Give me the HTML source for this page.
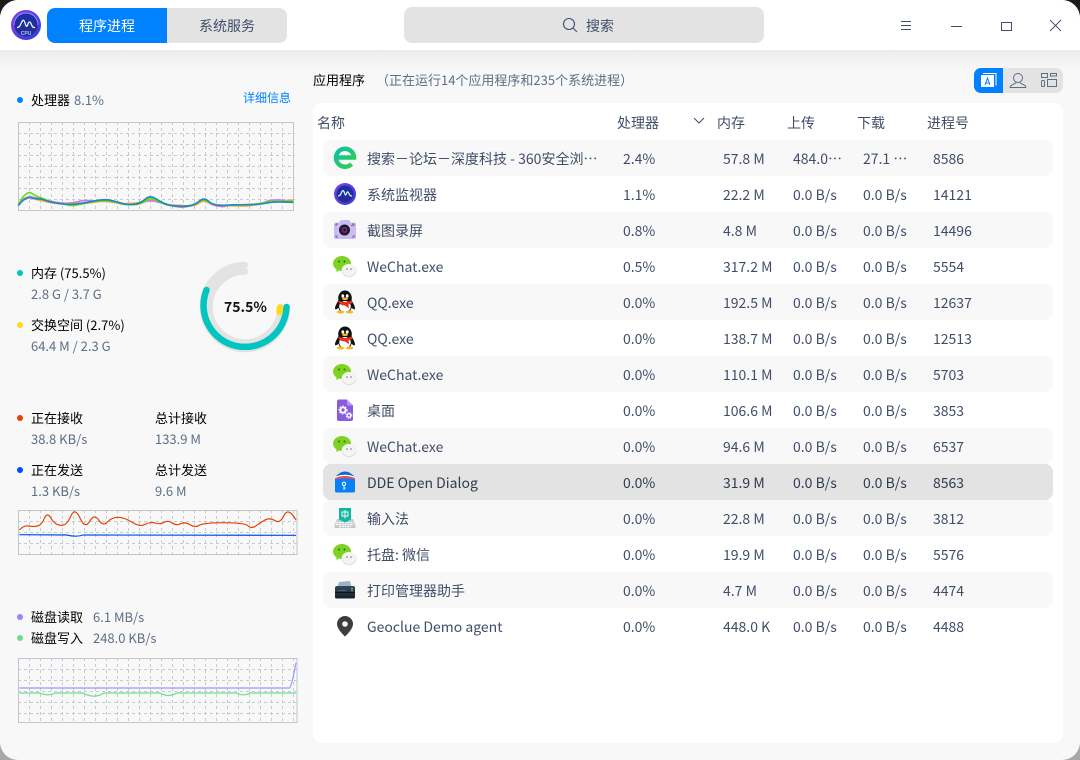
<!DOCTYPE html>
<html><head><meta charset="utf-8">
<style>
*{box-sizing:border-box}
html,body{margin:0;padding:0;width:1080px;height:760px;overflow:hidden}
body{background:linear-gradient(#1c1c1c 0,#2a2a2a 40px,#9a9a9a 400px,#a8a8a8 100%);font-family:"Noto Sans CJK SC","Liberation Sans",sans-serif;font-size:14px;position:relative}
#win{position:absolute;left:0;top:0;width:1080px;height:760px;border-radius:18px;background:#f8f8f8;overflow:hidden}
#tb{position:absolute;left:0;top:0;width:1080px;height:50px;background:#fff}
#sh{position:absolute;left:0;top:50px;width:1080px;height:20px;background:linear-gradient(#ebebeb,#f8f8f8)}
.t{position:absolute;white-space:nowrap;line-height:20px}
.k{color:#000;font-size:13px}
.g{color:#5c6f84;font-size:13px}
.c{color:#414d68}
.d{position:absolute;width:6px;height:6px;border-radius:50%}
#main{position:absolute;left:313px;top:103px;width:750px;height:640px;background:#fff;border-radius:8px}
.r{position:absolute;left:323px;width:730px;height:36px;border-radius:8px;color:#414d68}
.r.o{background:#f8f8f8}
.r.s{background:#e3e3e3;color:#303a4f}
.r span{position:absolute;top:8.500px;line-height:20px;white-space:nowrap}
.r svg{position:absolute;left:10px;top:6px;width:24px;height:24px}
.a{left:44px}.b{left:300px}.e{left:400px}.f{left:470px}.h{left:540px}.i{left:610px}
svg.abs{position:absolute;left:0;top:0}
</style></head><body>
<svg width="0" height="0" style="position:absolute">
<defs>
<linearGradient id="lg1" x1="0" y1="0" x2="1" y2="1"><stop offset="0" stop-color="#8a3df0"/><stop offset="1" stop-color="#2a3fd8"/></linearGradient>
<linearGradient id="lg2" x1="0" y1="0" x2="0" y2="1"><stop offset="0" stop-color="#1a2fa8"/><stop offset="1" stop-color="#2c2a90"/></linearGradient>
<linearGradient id="eg" x1="0" y1="0" x2="1" y2="1"><stop offset="0" stop-color="#0fc0a8"/><stop offset="1" stop-color="#2fd04a"/></linearGradient>
<linearGradient id="prb" x1="0" y1="0" x2="0" y2="1"><stop offset="0" stop-color="#33475a"/><stop offset="1" stop-color="#16222e"/></linearGradient>
<symbol id="mon" viewBox="0 0 24 24"><circle cx="12" cy="12" r="11" fill="url(#lg1)"/><circle cx="12" cy="12" r="8.500" fill="url(#lg2)"/><path d="M5 14c2 0 2.500-1 3.500-3.500C9.500 8 10.500 8 11.300 10.500S12.500 14 13.500 11.500 15 9.500 16 11.500 17 14 19 14" fill="none" stroke="#dff" stroke-width="1.200"/></symbol>
<symbol id="e360" viewBox="0 0 24 24"><path d="M4 11.500H21A9 9 0 1 0 18.500 18" fill="none" stroke="url(#eg)" stroke-width="4.500"/></symbol>
<symbol id="cam" viewBox="0 0 24 24"><path d="M3 4.500h3.500l1-2.500h9l1 2.500H21a2 2 0 0 1 2 2V19a2 2 0 0 1-2 2H3a2 2 0 0 1-2-2V6.500a2 2 0 0 1 2-2z" fill="#cbbcf4"/><path d="M3 8V6h2M21 8V6h-2M3 17v2h2M21 17v2h-2" stroke="#5a4a90" fill="none" stroke-width=".8"/><circle cx="11.500" cy="12" r="5.500" fill="#1f1a26"/><circle cx="11.500" cy="12" r="3" fill="#7a2a78"/><circle cx="11.500" cy="12" r="1.300" fill="#15101a"/><circle cx="19" cy="7.500" r=".9" fill="#e04040"/></symbol>
<symbol id="wx" viewBox="0 0 24 24"><ellipse cx="9" cy="9.500" rx="9" ry="7.500" fill="#7ed321"/><path d="M4 14l-1 4 4-2z" fill="#7ed321"/><circle cx="6" cy="7.500" r="1" fill="#2f6b10"/><circle cx="11.500" cy="7.500" r="1" fill="#2f6b10"/><ellipse cx="16" cy="16.500" rx="7.500" ry="6.500" fill="#dcdcdc"/><ellipse cx="16" cy="16" rx="7" ry="6" fill="#f4f4f4"/><circle cx="14" cy="15" r=".8" fill="#777"/><circle cx="18" cy="15" r=".8" fill="#777"/></symbol>
<symbol id="qq" viewBox="0 0 24 24"><ellipse cx="12" cy="8" rx="6.800" ry="7.500" fill="#111"/><path d="M5.500 10C4 13 2 16 2 18.500c0 1.500 1.800 .7 3.500-.8C6 20.500 8 22 12 22s6-1.500 6.500-4.300c1.700 1.500 3.500 2.300 3.500.8C22 16 20 13 18.500 10z" fill="#111"/><ellipse cx="12" cy="16.500" rx="5.800" ry="5.500" fill="#fff"/><path d="M5 10.500c4.500 2 9.500 2 14 0l.5 2.500-4 1.500.5 3.800-4-2.800C9 15.500 5.500 14 5 10.500z" fill="#e8311f"/><ellipse cx="9.800" cy="6" rx="1.400" ry="1.800" fill="#fff"/><ellipse cx="14.200" cy="6" rx="1.400" ry="1.800" fill="#fff"/><ellipse cx="12" cy="8.800" rx="3" ry="1.300" fill="#f8b81c"/><ellipse cx="7.500" cy="22" rx="3.800" ry="1.500" fill="#f8b81c"/><ellipse cx="16.500" cy="22" rx="3.800" ry="1.500" fill="#f8b81c"/></symbol>
<symbol id="desk" viewBox="0 0 24 24"><path d="M4 3.500A2 2 0 0 1 6 1.500h8l6 6V21a2 2 0 0 1-2 2H6a2 2 0 0 1-2-2z" fill="#8a5be0"/><path d="M14 1.500l6 6h-4a2 2 0 0 1-2-2z" fill="#b99af0"/><circle cx="10" cy="12" r="2.600" fill="none" stroke="#fff" stroke-width="1.800"/><circle cx="10" cy="12" r="4" fill="none" stroke="#fff" stroke-width="1" stroke-dasharray="1.500 1.500"/><circle cx="16" cy="17.500" r="1.800" fill="none" stroke="#fff" stroke-width="1.400"/><circle cx="16" cy="17.500" r="3" fill="none" stroke="#fff" stroke-width=".8" stroke-dasharray="1.200 1.200"/></symbol>
<symbol id="dde" viewBox="0 0 24 24"><path d="M2 7C6 3 9 1.500 12 1.500S18 3 22 7v4H2z" fill="#0a6cd0"/><path d="M2 8c6-3 14-3 20 0v2H2z" fill="#f04a58"/><path d="M2 7.500c6-2.800 14-2.800 20 0" stroke="#fff" stroke-width="1.300" fill="none"/><path d="M2 9.500c6-1.500 14-1.500 20 0V21a1.500 1.500 0 0 1-1.500 1.500h-17A1.500 1.500 0 0 1 2 21z" fill="#0a80f5"/><circle cx="11" cy="13.800" r="1.700" fill="none" stroke="#fff"/><path d="M11 15.500v4.500M11 18h1.500" stroke="#fff"/></symbol>
<symbol id="ime" viewBox="0 0 24 24"><path d="M4 13h16l2.500 6.500v2a1 1 0 0 1-1 .5H2.500a1 1 0 0 1-1-.5v-2z" fill="#c4c9cb"/><path d="M3.500 16.500h17M3 18.500h18M6 20.500h12" stroke="#fff" stroke-width="1.200" stroke-dasharray="2 .8"/><path d="M6 2h12v11.500l-6 3-6-3z" fill="#0fb8a2"/><path d="M9 6h6v4H9zM12 4v8.500" fill="none" stroke="#fff" stroke-width=".9"/></symbol>
<symbol id="prn" viewBox="0 0 24 24"><path d="M6 4l11-1 1.500 5.500h-14z" fill="#9db4c4"/><path d="M4 8h16a2 2 0 0 1 2 2v9a1.500 1.500 0 0 1-1.500 1.500h-17A1.500 1.500 0 0 1 2 19v-9a2 2 0 0 1 2-2z" fill="url(#prb)"/><rect x="2" y="14" width="20" height="1" fill="#0c151d"/><rect x="18" y="10" width="2" height="1.200" fill="#e8a030"/><rect x="18" y="12" width="2" height="1.200" fill="#3aa0e0"/><rect x="5" y="12" width="8" height=".8" fill="#5a6f7f"/></symbol>
<symbol id="pin" viewBox="0 0 24 24"><path d="M12 2a8 8 0 0 0-8 8c0 5.500 8 12.500 8 12.500s8-7 8-12.500a8 8 0 0 0-8-8z" fill="#3d3d3d"/><circle cx="12" cy="10" r="2.800" fill="#f4f4f4"/></symbol>
</defs></svg>

<div id="win">
<div id="tb"></div><div id="sh"></div>

<svg class="abs" style="left:11px;top:10px" width="30" height="30" viewBox="0 0 30 30"><circle cx="15" cy="15" r="15" fill="url(#lg1)"/><path d="M3 15A12 12 0 0 1 27 15" fill="none" stroke="#a8b4ff" stroke-width="1" opacity=".7"/><circle cx="15" cy="15" r="11.500" fill="url(#lg2)"/><path d="M6 17.500c2.500 0 3-1.500 4.500-5 1.300-3 2.500-3 3.500 .5s1.800 4.500 2.800 1.500 2.200-3.500 3.400-.5 1.500 3.500 3.800 3.500" fill="none" stroke="#e6fbff" stroke-width="1.300"/><text x="15" y="25" text-anchor="middle" font-size="5" font-weight="700" fill="#8fd0ff" font-family="Liberation Sans,sans-serif">CPU</text></svg>
<div style="position:absolute;left:47px;top:8px;width:120px;height:35px;background:#0081ff;border-radius:8px 0 0 8px"></div>
<div style="position:absolute;left:167px;top:8px;width:120px;height:35px;background:#e3e3e3;border-radius:0 8px 8px 0"></div>
<div class="t" style="left:79px;top:16px;color:#fff;font-size:14px">程序进程</div>
<div class="t" style="left:199px;top:16px;color:#414d68">系统服务</div>
<div style="position:absolute;left:404px;top:7px;width:360px;height:36px;background:#e3e3e3;border-radius:8px"></div>
<svg class="abs" style="left:562px;top:17px" width="16" height="16" viewBox="0 0 16 16"><circle cx="7" cy="7" r="5.500" fill="none" stroke="#414d68" stroke-width="1.100"/><path d="M11 11l4 4" stroke="#414d68" stroke-width="1.100"/></svg>
<div class="t" style="left:586px;top:16px;color:#414d68">搜索</div>

<svg class="abs" width="1080" height="130" style="pointer-events:none">
<path d="M901 21.500h10M901 25.500h10M901 29.500h10" stroke="#414d68" fill="none"/>
<path d="M951 26.500h11" stroke="#414d68" fill="none"/>
<rect x="1001.500" y="22.500" width="10" height="8" fill="none" stroke="#414d68"/>
<path d="M1050 20l11 11M1061 20l-11 11" stroke="#414d68" fill="none" stroke-width=".9"/>
<path d="M974 75a7 7 0 0 1 7-7h75a7 7 0 0 1 7 7v11a7 7 0 0 1-7 7h-75a7 7 0 0 1-7-7z" fill="#e3e3e3"/>
<path d="M1003 68h-22a7 7 0 0 0-7 7v11a7 7 0 0 0 7 7h22z" fill="#0081ff"/>
<rect x="981" y="75" width="13" height="12" fill="#fff"/>
<path d="M983 73.500h13v12" fill="none" stroke="#fff"/>
<path d="M985 85l2.500-7 2.500 7M986 83h3" stroke="#0081ff" fill="none" stroke-width="1"/>
<circle cx="1018" cy="78" r="4.500" fill="none" stroke="#5c6f84"/>
<path d="M1010 87.500c0-3 5-3 6-5M1026 87.500c0-3-5-3-6-5M1010 87.500h16" fill="none" stroke="#5c6f84"/>
<rect x="1041.500" y="73.500" width="6" height="4" fill="none" stroke="#5c6f84"/>
<rect x="1050.500" y="73.500" width="6" height="2.500" fill="none" stroke="#5c6f84"/>
<rect x="1041.500" y="80.500" width="3" height="6" rx="1" fill="none" stroke="#5c6f84"/>
<rect x="1047.500" y="79.500" width="9" height="7" fill="none" stroke="#5c6f84"/>
</svg>

<!-- left cpu -->
<div class="d" style="left:17px;top:97px;background:#0081ff"></div>
<div class="t k" style="left:31px;top:90px">处理器</div>
<div class="t g" style="left:74px;top:90px">8.1%</div>
<div class="t" style="left:243px;top:88px;color:#0081ff;font-size:12px">详细信息</div>
<svg class="abs" style="left:18px;top:122px" width="277" height="89" viewBox="0 0 277 89">
<g stroke="#c5cbd3" stroke-dasharray="3 3" stroke-width="1" fill="none">
<path d="M11.500 0v89M22.500 0v89M33.500 0v89M44.500 0v89M55.500 0v89M66.500 0v89M77.500 0v89M88.500 0v89M99.500 0v89M110.500 0v89M121.500 0v89M132.500 0v89M143.500 0v89M154.500 0v89M165.500 0v89M176.500 0v89M187.500 0v89M198.500 0v89M209.500 0v89M220.500 0v89M231.500 0v89M242.500 0v89M253.500 0v89M264.500 0v89"/>
<path d="M0 11.500h277M0 22.500h277M0 33.500h277M0 44.500h277M0 55.500h277M0 66.500h277M0 77.500h277"/>
</g>
<rect x=".5" y=".5" width="275" height="88" fill="none" stroke="#c0c6d0"/>
</svg>
<svg class="abs" width="300" height="220" viewBox="0 0 900 660" fill="none" stroke-width="5">
<path stroke="#cc77ee" d="M55 612Q75 590 92 590Q110 595 130 598Q155 606 182 609Q210 612 235 605Q250 598 287 604Q315 604 332 604Q350 605 365 610Q380 613 400 612Q420 612 435 605Q450 600 465 604Q480 608 495 612Q510 618 545 622Q580 618 596 608Q612 598 626 608Q640 618 670 620Q700 612 740 616Q780 614 800 604Q820 598 850 601L880 603"/>
<path stroke="#ffa726" d="M55 610Q75 595 92 592Q110 600 120 600Q130 602 142 606Q155 608 182 611Q210 612 235 610Q260 610 287 606Q315 602 332 606Q350 608 365 611Q380 611 400 610Q420 610 435 600Q450 594 465 600Q480 606 495 612Q510 616 545 616Q580 622 596 610Q612 598 626 608Q640 614 670 616Q700 618 740 618Q780 614 800 606Q820 603 850 604L880 600"/>
<path stroke="#66dd11" d="M55 615Q75 575 92 578Q110 590 125 594Q140 600 150 606Q170 610 190 612Q215 620 235 614Q260 610 287 604Q315 600 332 604Q350 606 365 612Q380 614 400 614Q420 614 435 604Q450 590 465 600Q480 606 495 613Q510 618 545 619Q580 618 596 606Q612 594 626 606Q640 616 670 616Q700 616 740 614Q780 612 800 606Q820 604 850 604L880 604"/>
<path stroke="#1e88c8" d="M55 617Q75 590 92 593Q110 597 120 597Q130 598 142 603Q155 608 182 611Q210 615 235 611Q260 608 287 602Q315 597 332 601Q350 605 365 610Q380 615 400 613Q420 612 435 598Q450 585 465 595Q480 605 495 611Q510 618 545 619Q580 620 596 605Q612 590 626 604Q640 618 670 616Q700 614 740 614Q780 614 800 609Q820 605 850 606L880 607"/>
</svg>

<!-- memory -->
<div class="d" style="left:17px;top:270px;background:#00c5c0"></div>
<div class="t k" style="left:31px;top:263px">内存 (75.5%)</div>
<div class="t g" style="left:31px;top:284px">2.8 G / 3.7 G</div>
<div class="d" style="left:17px;top:322px;background:#ffd91a"></div>
<div class="t k" style="left:31px;top:315px">交换空间 (2.7%)</div>
<div class="t g" style="left:31px;top:336px">64.4 M / 2.3 G</div>
<svg class="abs" style="left:190px;top:252px" width="110" height="110" viewBox="190 252 110 110" fill="none" stroke-linecap="round">
<path d="M287 307A42 42 0 1 1 245 265" stroke="#e3e3e3" stroke-width="6.500"/>
<path d="M280.500 307A35.500 35.500 0 1 1 245 271.500" stroke="#e3e3e3" stroke-width="6.500"/>
<path d="M286.500 307A41.500 41.500 0 1 1 206.500 290" stroke="#00c5c0" stroke-width="6.500"/>
<path d="M280 307.500A35 35 0 0 1 279.500 312" stroke="#ffd91a" stroke-width="6.500"/>
</svg>
<div class="t" style="left:224px;top:297px;font-weight:700;font-size:14px;color:#111">75.5%</div>

<!-- network -->
<div class="d" style="left:17px;top:415px;background:#e14300"></div>
<div class="t k" style="left:31px;top:408px">正在接收</div>
<div class="t g" style="left:31px;top:429px">38.8 KB/s</div>
<div class="t k" style="left:155px;top:408px">总计接收</div>
<div class="t g" style="left:155px;top:429px">133.9 M</div>
<div class="d" style="left:17px;top:467px;background:#004cff"></div>
<div class="t k" style="left:31px;top:460px">正在发送</div>
<div class="t g" style="left:31px;top:481px">1.3 KB/s</div>
<div class="t k" style="left:155px;top:460px">总计发送</div>
<div class="t g" style="left:155px;top:481px">9.6 M</div>
<svg class="abs" style="left:18px;top:510px" width="280" height="45" viewBox="0 0 280 45">
<g stroke="#c5cbd3" stroke-dasharray="3 3" fill="none">
<path d="M11.500 0v45M22.500 0v45M33.500 0v45M44.500 0v45M55.500 0v45M66.500 0v45M77.500 0v45M88.500 0v45M99.500 0v45M110.500 0v45M121.500 0v45M132.500 0v45M143.500 0v45M154.500 0v45M165.500 0v45M176.500 0v45M187.500 0v45M198.500 0v45M209.500 0v45M220.500 0v45M231.500 0v45M242.500 0v45M253.500 0v45M264.500 0v45M275.500 0v45"/>
<path d="M0 11.500h280M0 22.500h280M0 33.500h280"/>
</g>
<rect x=".5" y=".5" width="278.500" height="44" fill="none" stroke="#c0c6d0"/>
</svg>
<svg class="abs" style="left:0;top:250px" width="300" height="310" viewBox="0 0 900 930" fill="none" stroke-width="3.500">
<path stroke="#e14300" d="M58 840Q72 825 86 828Q100 831 112 828Q125 826 133 805Q142 785 153 805Q165 825 182 826Q200 828 212 799Q225 770 240 804Q255 838 269 814Q283 790 296 810Q310 830 322 816Q335 803 352 802Q370 801 395 816Q420 832 435 823Q450 815 465 819Q480 824 492 817Q505 810 517 819Q530 828 542 821Q555 815 570 824Q585 834 597 826Q610 818 672 818Q735 818 745 828Q755 838 770 826Q785 815 797 809Q810 803 825 812Q840 822 852 796Q865 770 888 810"/>
<path stroke="#004cff" d="M58 854L200 855Q228 862 250 855L888 856"/>
</svg>

<!-- disk -->
<div class="d" style="left:17px;top:614px;background:#8f88ff"></div>
<div class="t k" style="left:31px;top:607px">磁盘读取</div>
<div class="t g" style="left:93px;top:607px">6.1 MB/s</div>
<div class="d" style="left:17px;top:635px;background:#6fdc8c"></div>
<div class="t k" style="left:31px;top:628px">磁盘写入</div>
<div class="t g" style="left:93px;top:628px">248.0 KB/s</div>
<svg class="abs" style="left:18px;top:658px" width="280" height="65" viewBox="0 0 280 65">
<g stroke="#c5cbd3" stroke-dasharray="3 3" fill="none">
<path d="M11.500 0v65M22.500 0v65M33.500 0v65M44.500 0v65M55.500 0v65M66.500 0v65M77.500 0v65M88.500 0v65M99.500 0v65M110.500 0v65M121.500 0v65M132.500 0v65M143.500 0v65M154.500 0v65M165.500 0v65M176.500 0v65M187.500 0v65M198.500 0v65M209.500 0v65M220.500 0v65M231.500 0v65M242.500 0v65M253.500 0v65M264.500 0v65M275.500 0v65"/>
<path d="M0 11.500h280M0 22.500h280M0 33.500h280M0 44.500h280M0 55.500h280"/>
</g>
<rect x=".5" y=".5" width="278.500" height="64" fill="none" stroke="#c0c6d0"/>
</svg>
<svg class="abs" style="left:0;top:600px" width="310" height="160" viewBox="0 0 930 480" fill="none">
<path stroke="#9a94ff" stroke-width="3.500" d="M58 264L868 264Q875 260 888 188"/>
<path stroke="#6fdc8c" stroke-width="3.500" d="M58 279H120Q145 290 165 279H250Q282 298 312 279H480Q505 294 530 279H710Q730 290 750 279H888"/>
</svg>

<!-- right -->
<div class="t k" style="left:313px;top:70px">应用程序</div>
<div class="t g" style="left:376px;top:70px">（正在运行14个应用程序和235个系统进程）</div>
<div id="main"></div>
<div class="t c" style="left:317px;top:113px">名称</div>
<div class="t c" style="left:617px;top:113px">处理器</div>
<svg class="abs" style="left:693px;top:117px" width="12" height="8"><path d="M1 1l5 5 5-5" fill="none" stroke="#414d68"/></svg>
<div class="t c" style="left:717px;top:113px">内存</div>
<div class="t c" style="left:787px;top:113px">上传</div>
<div class="t c" style="left:857px;top:113px">下载</div>
<div class="t c" style="left:927px;top:113px">进程号</div>

<div class="r o" style="top:140px"><svg><use href="#e360"/></svg><span class="a">搜索－论坛－深度科技 - 360安全浏…</span><span class="b">2.4%</span><span class="e">57.8 M</span><span class="f">484.0…</span><span class="h">27.1 …</span><span class="i">8586</span></div>
<div class="r" style="top:176px"><svg><use href="#mon"/></svg><span class="a">系统监视器</span><span class="b">1.1%</span><span class="e">22.2 M</span><span class="f">0.0 B/s</span><span class="h">0.0 B/s</span><span class="i">14121</span></div>
<div class="r o" style="top:212px"><svg><use href="#cam"/></svg><span class="a">截图录屏</span><span class="b">0.8%</span><span class="e">4.8 M</span><span class="f">0.0 B/s</span><span class="h">0.0 B/s</span><span class="i">14496</span></div>
<div class="r" style="top:248px"><svg><use href="#wx"/></svg><span class="a">WeChat.exe</span><span class="b">0.5%</span><span class="e">317.2 M</span><span class="f">0.0 B/s</span><span class="h">0.0 B/s</span><span class="i">5554</span></div>
<div class="r o" style="top:284px"><svg><use href="#qq"/></svg><span class="a">QQ.exe</span><span class="b">0.0%</span><span class="e">192.5 M</span><span class="f">0.0 B/s</span><span class="h">0.0 B/s</span><span class="i">12637</span></div>
<div class="r" style="top:320px"><svg><use href="#qq"/></svg><span class="a">QQ.exe</span><span class="b">0.0%</span><span class="e">138.7 M</span><span class="f">0.0 B/s</span><span class="h">0.0 B/s</span><span class="i">12513</span></div>
<div class="r o" style="top:356px"><svg><use href="#wx"/></svg><span class="a">WeChat.exe</span><span class="b">0.0%</span><span class="e">110.1 M</span><span class="f">0.0 B/s</span><span class="h">0.0 B/s</span><span class="i">5703</span></div>
<div class="r" style="top:392px"><svg><use href="#desk"/></svg><span class="a">桌面</span><span class="b">0.0%</span><span class="e">106.6 M</span><span class="f">0.0 B/s</span><span class="h">0.0 B/s</span><span class="i">3853</span></div>
<div class="r o" style="top:428px"><svg><use href="#wx"/></svg><span class="a">WeChat.exe</span><span class="b">0.0%</span><span class="e">94.6 M</span><span class="f">0.0 B/s</span><span class="h">0.0 B/s</span><span class="i">6537</span></div>
<div class="r s" style="top:464px"><svg><use href="#dde"/></svg><span class="a">DDE Open Dialog</span><span class="b">0.0%</span><span class="e">31.9 M</span><span class="f">0.0 B/s</span><span class="h">0.0 B/s</span><span class="i">8563</span></div>
<div class="r o" style="top:500px"><svg><use href="#ime"/></svg><span class="a">输入法</span><span class="b">0.0%</span><span class="e">22.8 M</span><span class="f">0.0 B/s</span><span class="h">0.0 B/s</span><span class="i">3812</span></div>
<div class="r" style="top:536px"><svg><use href="#wx"/></svg><span class="a">托盘: 微信</span><span class="b">0.0%</span><span class="e">19.9 M</span><span class="f">0.0 B/s</span><span class="h">0.0 B/s</span><span class="i">5576</span></div>
<div class="r o" style="top:572px"><svg><use href="#prn"/></svg><span class="a">打印管理器助手</span><span class="b">0.0%</span><span class="e">4.7 M</span><span class="f">0.0 B/s</span><span class="h">0.0 B/s</span><span class="i">4474</span></div>
<div class="r" style="top:608px"><svg><use href="#pin"/></svg><span class="a">Geoclue Demo agent</span><span class="b">0.0%</span><span class="e">448.0 K</span><span class="f">0.0 B/s</span><span class="h">0.0 B/s</span><span class="i">4488</span></div>
</div>
</body></html>
